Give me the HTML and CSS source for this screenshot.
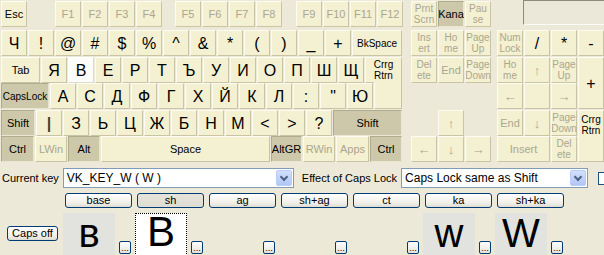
FILE: index.html
```html
<!DOCTYPE html>
<html>
<head lang="en">
    <meta charset="UTF-8">
    <title>Keyboard layout editor</title>
    <link rel="stylesheet" href="styles.css">
</head>
<body>
    <div class="kb">
        <div class="main">
            <div class="row r0">
                <span class="key">Esc</span>
                <span class="key off f1">F1</span>
                <span class="key off">F2</span>
                <span class="key off">F3</span>
                <span class="key off">F4</span>
                <span class="key off f5">F5</span>
                <span class="key off">F6</span>
                <span class="key off">F7</span>
                <span class="key off">F8</span>
                <span class="key off f9">F9</span>
                <span class="key off">F10</span>
                <span class="key off">F11</span>
                <span class="key off">F12</span>
            </div>
            <div class="row r1">
                <span class="key big">Ч</span>
                <span class="key big">!</span>
                <span class="key big">@</span>
                <span class="key big">#</span>
                <span class="key big">$</span>
                <span class="key big">%</span>
                <span class="key big">^</span>
                <span class="key big">&amp;</span>
                <span class="key big">*</span>
                <span class="key big">(</span>
                <span class="key big">)</span>
                <span class="key big">_</span>
                <span class="key big">+</span>
                <span class="key small w50">BkSpace</span>
            </div>
            <div class="row r2">
                <span class="key w39">Tab</span>
                <span class="key big">Я</span>
                <span class="key big sel">В</span>
                <span class="key big">Е</span>
                <span class="key big">Р</span>
                <span class="key big">Т</span>
                <span class="key big">Ъ</span>
                <span class="key big">У</span>
                <span class="key big">И</span>
                <span class="key big">О</span>
                <span class="key big">П</span>
                <span class="key big">Ш</span>
                <span class="key big">Щ</span>
                <span class="key two enter-top">Crrg<br>Rtrn</span>
            </div>
            <div class="row r3">
                <span class="key small dn w48">CapsLock</span>
                <span class="key big">А</span>
                <span class="key big">С</span>
                <span class="key big">Д</span>
                <span class="key big">Ф</span>
                <span class="key big">Г</span>
                <span class="key big">Х</span>
                <span class="key big">Й</span>
                <span class="key big">К</span>
                <span class="key big">Л</span>
                <span class="key big">:</span>
                <span class="key big">"</span>
                <span class="key big">Ю</span>
                <span class="key enter-bot"></span>
            </div>
            <div class="row r4">
                <span class="key dn w34">Shift</span>
                <span class="key big bar">|</span>
                <span class="key big">З</span>
                <span class="key big">Ь</span>
                <span class="key big">Ц</span>
                <span class="key big">Ж</span>
                <span class="key big">Б</span>
                <span class="key big">Н</span>
                <span class="key big">М</span>
                <span class="key big">&lt;</span>
                <span class="key big">&gt;</span>
                <span class="key big">?</span>
                <span class="key dn w69">Shift</span>
            </div>
            <div class="row r5">
                <span class="key dn w33">Ctrl</span>
                <span class="key off w32">LWin</span>
                <span class="key dn w32">Alt</span>
                <span class="key space">Space</span>
                <span class="key dn w31">AltGR</span>
                <span class="key off w32">RWin</span>
                <span class="key off w33">Apps</span>
                <span class="key dn w32">Ctrl</span>
            </div>
        </div>

        <div class="nav">
            <span class="key off two">Prnt<br>Scrn</span>
            <span class="key dn">Kana</span>
            <span class="key off two">Pau<br>se</span>
            <span class="key off two">Ins<br>ert</span>
            <span class="key off two">Ho<br>me</span>
            <span class="key off two">Page<br>Up</span>
            <span class="key off two">Del<br>ete</span>
            <span class="key off">End</span>
            <span class="key off two">Page<br>Down</span>
            <span class="key off arrow up5">&uarr;</span>
            <span class="key off arrow last">&larr;</span>
            <span class="key off arrow last">&darr;</span>
            <span class="key off arrow last">&rarr;</span>
        </div>

        <div class="num">
            <span class="lcd"></span>
            <span class="key off two">Num<br>Lock</span>
            <span class="key big">/</span>
            <span class="key big">*</span>
            <span class="key big">-</span>
            <span class="key off two">Ho<br>me</span>
            <span class="key off arrow">&uarr;</span>
            <span class="key off two">Page<br>Up</span>
            <span class="key big tall">+</span>
            <span class="key off arrow">&larr;</span>
            <span class="key off"></span>
            <span class="key off arrow">&rarr;</span>
            <span class="key off">End</span>
            <span class="key off arrow">&darr;</span>
            <span class="key off two">Page<br>Down</span>
            <span class="key two tall top">Crrg<br>Rtrn</span>
            <span class="key off wide">Insert</span>
            <span class="key off two">Del<br>ete</span>
        </div>
    </div>

    <div class="info">
        <span class="lbl">Current key</span>
        <div class="combo c1">VK_KEY_W ( W )<span class="drop"></span></div>
        <span class="lbl lbl2">Effect of Caps Lock</span>
        <div class="combo c2">Caps Lock same as Shift<span class="drop"></span></div>
        <span class="check"></span>
    </div>

    <div class="shifts">
        <span class="btn">base</span>
        <span class="btn on">sh</span>
        <span class="btn">ag</span>
        <span class="btn">sh+ag</span>
        <span class="btn">ct</span>
        <span class="btn">ka</span>
        <span class="btn">sh+ka</span>
    </div>

    <div class="cells">
        <span class="btn caps">Caps off</span>
        <div class="cell"><span class="glyph grey">в</span><span class="dots">...</span></div>
        <div class="cell"><span class="glyph focus">В</span><span class="dots">...</span></div>
        <div class="cell"><span class="glyph"></span><span class="dots">...</span></div>
        <div class="cell"><span class="glyph"></span><span class="dots">...</span></div>
        <div class="cell"><span class="glyph"></span><span class="dots">...</span></div>
        <div class="cell"><span class="glyph grey">w</span><span class="dots">...</span></div>
        <div class="cell"><span class="glyph grey">W</span><span class="dots">...</span></div>
    </div>
</body>
</html>
```

FILE: styles.css
```css
*
{
    margin: 0;
    padding: 0;
    box-sizing: border-box;
}

body
{
    width: 604px;
    height: 255px;
    overflow: hidden;
    background: #ece9d8;
    font-family: "Liberation Sans", Arial, sans-serif;
    font-size: 11px;
    color: #000;
}

/* keyboard */
.kb
{
    display: flex;
    padding: 1px 0 0 1px;
    height: 162px;
}
.main
{
    width: 402px;
    flex: none;
    display: flex;
    flex-direction: column;
}
.row
{
    display: flex;
    gap: 1px;
    height: 26px;
}
.r0 { margin-bottom: 3px; }
.r1 { margin-bottom: 1px; }
.r3 { margin-bottom: 1px; }

.key
{
    width: 26px;
    height: 26px;
    flex: none;
    display: flex;
    align-items: center;
    justify-content: center;
    text-align: center;
    background: #f4f0d2;
    border: 1px solid;
    border-color: #fdfcf2 #c9c4a4 #c9c4a4 #fdfcf2;
    font-size: 11px;
    line-height: 11px;
    color: #000;
    white-space: nowrap;
}
.key.big
{
    font-size: 16px;
}
.key.small
{
    font-size: 10px;
}
.key.two
{
    font-size: 10px;
    line-height: 11px;
}
.key.off
{
    color: #aaa78e;
}
.key.dn
{
    background: #cdc8aa;
    border-color: #b0ab8e #e9e6d3 #e9e6d3 #b0ab8e;
}
.key.sel
{
    background: #fcfcf9;
    border-color: #fff #dedcd0 #dedcd0 #fff;
}
.key.bar
{
    color: #4b4528;
    font-weight: bold;
}
.key.arrow
{
    font-size: 13px;
}

.f1 { margin-left: 27px; }
.f5 { margin-left: 12px; }
.f9 { margin-left: 13px; }

.w31 { width: 31px; }
.w32 { width: 32px; }
.w33 { width: 33px; }
.w34 { width: 34px; }
.w39 { width: 39px; }
.w48 { width: 48px; }
.w50 { width: 50px; }
.w69 { width: 69px; }
.space { width: 169px; }

.enter-top
{
    width: 37px;
}
.enter-bot
{
    width: 28px;
    height: 27px;
    margin-top: -1px;
    border-top: none;
}

.nav, .num
{
    display: grid;
    flex: none;
    grid-template-columns: repeat(3, 26px);
    grid-template-rows: 29px 27px 26px 27px 26px 26px;
    column-gap: 1px;
    align-items: start;
}
.nav
{
    margin-left: 8px;
}
.num
{
    margin-left: 6px;
    grid-template-columns: repeat(4, 26px);
}
.up5
{
    grid-row: 5;
    grid-column: 2;
}
.last
{
    grid-row: 6;
}
.lcd
{
    grid-column: 2 / 5;
    height: 25px;
    margin: -1px -1px 0 -1px;
    border: 1px solid;
    border-color: #8d8a7c #fbfaf3 #fbfaf3 #8d8a7c;
    background: #ebe8da;
}
.num .tall
{
    grid-row: span 2;
    height: 52px;
}
.num .top
{
    align-items: flex-start;
    padding-top: 3px;
}
.num .wide
{
    grid-column: span 2;
    width: 53px;
}

/* editor controls */
.info
{
    display: flex;
    align-items: center;
    height: 20px;
    margin-top: 6px;
    white-space: nowrap;
}
.lbl
{
    flex: none;
    margin-left: 2px;
    font-size: 11px;
}
.lbl2
{
    margin-left: 8px;
}
.combo
{
    flex: none;
    height: 20px;
    margin-left: 4px;
    padding-left: 3px;
    display: flex;
    align-items: center;
    justify-content: space-between;
    background: #fff;
    border: 1px solid #7f9db9;
    font-size: 12px;
}
.c1 { width: 231px; }
.c2 { width: 187px; }
.drop
{
    width: 16px;
    height: 16px;
    margin-right: 1px;
    border-radius: 2px;
    background: linear-gradient(#d2e0fd, #b0c6f5);
    border: 1px solid #b9cdf6;
    position: relative;
}
.drop:after
{
    content: "";
    position: absolute;
    left: 4px;
    top: 3px;
    width: 4px;
    height: 4px;
    border-right: 2px solid #4d6185;
    border-bottom: 2px solid #4d6185;
    transform: rotate(45deg);
}
.check
{
    width: 13px;
    height: 13px;
    margin-left: 10px;
    flex: none;
    background: #fff;
    border: 1px solid #1c5180;
}

.shifts
{
    display: flex;
    gap: 5px;
    margin-top: 5px;
    padding-left: 65px;
}
.btn
{
    width: 67px;
    height: 15px;
    flex: none;
    border: 1px solid #003c74;
    border-radius: 3px;
    background: linear-gradient(#ffffff, #f0efe8 70%, #dedcd2);
    font-size: 11px;
    line-height: 13px;
    text-align: center;
    white-space: nowrap;
}
.btn.on
{
    background: linear-gradient(#e5e3da, #dfddd3);
}

.cells
{
    display: flex;
    margin-top: 5px;
}
.btn.caps
{
    width: 51px;
    margin: 13px 0 0 7px;
}
.cell
{
    display: flex;
    gap: 4px;
    width: 72px;
    flex: none;
}
.cell:first-of-type
{
    margin-left: 5px;
}
.glyph
{
    width: 52px;
    height: 43px;
    font-size: 40px;
    line-height: 40px;
    text-align: center;
}
.glyph.grey
{
    background: #e2e2df;
}
.glyph.focus
{
    background: #fff;
    border: 1px dotted #000;
    border-bottom: none;
    line-height: 36px;
    font-size: 42px;
}
.dots
{
    width: 12px;
    height: 13px;
    margin-top: 28px;
    padding-top: 2px;
    border: 1px solid #003c74;
    border-radius: 2px;
    background: linear-gradient(#ffffff, #e6e4da);
    font-size: 9px;
    line-height: 9px;
    text-align: center;
    overflow: hidden;
}
```
